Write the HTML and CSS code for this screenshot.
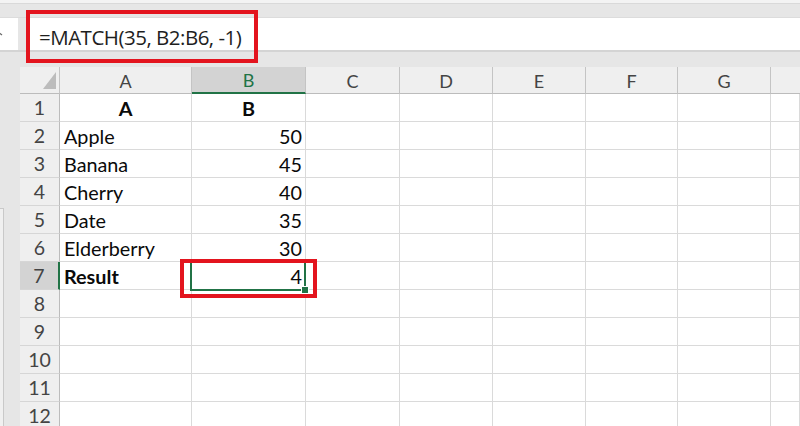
FILE: index.html
```
<!DOCTYPE html>
<html>
<head>
<meta charset="utf-8">
<link rel="stylesheet" href="styles.css">
</head>
<body>
<div class="app">
  <div class="ribbon"></div>
  <div class="formula-row">
    <div class="name-box"><svg class="nb-mark" width="6" height="32" viewBox="0 0 6 32"><polyline points="-2,14 2,17" fill="none" stroke="#666" stroke-width="1.2"/></svg></div>
    <div class="formula-input">=MATCH(35, B2:B6, -1)</div>
  </div>
  <div class="gap"></div>
  <div class="sheet-area">
    <div class="left-strip"><div class="strip-panel"></div></div>
    <div class="sheet">
      <div class="hdr corner"><svg class="tri" width="13" height="17" viewBox="0 0 13 17"><polygon points="13,0 13,17 0,17" fill="#bcbcbc"/></svg></div>
      <div class="hdr col">A</div>
      <div class="hdr col sel-col">B</div>
      <div class="hdr col">C</div>
      <div class="hdr col">D</div>
      <div class="hdr col">E</div>
      <div class="hdr col">F</div>
      <div class="hdr col">G</div>
      <div class="hdr col last"></div>

      <div class="hdr row">1</div>
      <div class="cell bold center">A</div>
      <div class="cell bold center">B</div>
      <div class="cell"></div><div class="cell"></div><div class="cell"></div><div class="cell"></div><div class="cell"></div><div class="cell"></div>

      <div class="hdr row">2</div>
      <div class="cell">Apple</div>
      <div class="cell num">50</div>
      <div class="cell"></div><div class="cell"></div><div class="cell"></div><div class="cell"></div><div class="cell"></div><div class="cell"></div>

      <div class="hdr row">3</div>
      <div class="cell">Banana</div>
      <div class="cell num">45</div>
      <div class="cell"></div><div class="cell"></div><div class="cell"></div><div class="cell"></div><div class="cell"></div><div class="cell"></div>

      <div class="hdr row">4</div>
      <div class="cell">Cherry</div>
      <div class="cell num">40</div>
      <div class="cell"></div><div class="cell"></div><div class="cell"></div><div class="cell"></div><div class="cell"></div><div class="cell"></div>

      <div class="hdr row">5</div>
      <div class="cell">Date</div>
      <div class="cell num">35</div>
      <div class="cell"></div><div class="cell"></div><div class="cell"></div><div class="cell"></div><div class="cell"></div><div class="cell"></div>

      <div class="hdr row">6</div>
      <div class="cell">Elderberry</div>
      <div class="cell num">30</div>
      <div class="cell"></div><div class="cell"></div><div class="cell"></div><div class="cell"></div><div class="cell"></div><div class="cell"></div>

      <div class="hdr row sel-row">7</div>
      <div class="cell bold">Result</div>
      <div class="cell num active">4<span class="fill-handle"></span></div>
      <div class="cell"></div><div class="cell"></div><div class="cell"></div><div class="cell"></div><div class="cell"></div><div class="cell"></div>

      <div class="hdr row">8</div>
      <div class="cell"></div><div class="cell"></div><div class="cell"></div><div class="cell"></div><div class="cell"></div><div class="cell"></div><div class="cell"></div><div class="cell"></div>

      <div class="hdr row">9</div>
      <div class="cell"></div><div class="cell"></div><div class="cell"></div><div class="cell"></div><div class="cell"></div><div class="cell"></div><div class="cell"></div><div class="cell"></div>

      <div class="hdr row">10</div>
      <div class="cell"></div><div class="cell"></div><div class="cell"></div><div class="cell"></div><div class="cell"></div><div class="cell"></div><div class="cell"></div><div class="cell"></div>

      <div class="hdr row">11</div>
      <div class="cell"></div><div class="cell"></div><div class="cell"></div><div class="cell"></div><div class="cell"></div><div class="cell"></div><div class="cell"></div><div class="cell"></div>

      <div class="hdr row">12</div>
      <div class="cell"></div><div class="cell"></div><div class="cell"></div><div class="cell"></div><div class="cell"></div><div class="cell"></div><div class="cell"></div><div class="cell"></div>
    </div>
  </div>
  <div class="callout callout-formula"></div>
  <div class="callout callout-result"></div>
</div>
</body>
</html>
```
FILE: styles.css
```
html, body {
  margin: 0;
  padding: 0;
}
body {
  width: 800px;
  height: 426px;
  overflow: hidden;
  background: #e6e6e6;
  font-family: "Lato", "Liberation Sans", sans-serif;
}
.app {
  position: relative;
  width: 800px;
  height: 426px;
  overflow: hidden;
  display: flex;
  flex-direction: column;
  background: #e6e6e6;
}
.ribbon {
  height: 18px;
  flex: none;
  box-sizing: border-box;
  background: #e6e6e6;
  border-top: 3px solid #f3f3f3;
  box-shadow: inset 0 1px 0 #d9d9d9, inset 0 -1px 0 #dcdcdc;
}
.formula-row {
  height: 34px;
  flex: none;
  box-sizing: border-box;
  display: flex;
  background: #e6e6e6;
  border-bottom: 2px solid #d4d4d4;
}
.name-box {
  width: 18px;
  background: #fff;
  overflow: hidden;
}
.nb-mark {
  display: block;
}
.formula-input {
  flex: 1;
  margin-left: 8px;
  background: #fff;
  padding: 0 0 0 13px;
  font-family: "Open Sans", "Noto Sans", sans-serif;
  font-size: 20.5px;
  letter-spacing: -0.5px;
  line-height: 38px;
  color: #1e1e1e;
  white-space: nowrap;
}
.gap {
  height: 15px;
  flex: none;
  background: #e6e6e6;
}
.sheet-area {
  flex: 1;
  display: flex;
  min-height: 0;
}
.left-strip {
  width: 20px;
  flex: none;
  background: #e6e6e6;
  display: flex;
  flex-direction: column;
  padding-top: 141px;
}
.strip-panel {
  width: 3px;
  flex: 1;
  background: #f0f0f0;
  border-top: 1px solid #c9c9c9;
  border-right: 1px solid #c9c9c9;
}
.sheet {
  flex: 1;
  display: grid;
  grid-template-columns: 40px 132px 114px 94px 93px 93px 92px 93px 1fr;
  grid-template-rows: 27px;
  grid-auto-rows: 28px;
  background: #fff;
}
.hdr {
  box-sizing: border-box;
  background: #efefef;
  color: #444;
  font-size: 18px;
  text-align: center;
}
.hdr.col {
  line-height: 28px;
  border-right: 1px solid #c4c4c4;
  border-bottom: 1px solid #bcbcbc;
}
.hdr.col.last {
  border-right: none;
}
.hdr.corner {
  position: relative;
  border-right: 1px solid #c4c4c4;
  border-bottom: 1px solid #bcbcbc;
}
.tri {
  position: absolute;
  right: 3px;
  bottom: 4px;
}
.hdr.row {
  font-size: 19.5px;
  line-height: 28px;
  border-right: 1px solid #bcbcbc;
  border-bottom: 1px solid #d6d6d6;
}
.sel-col {
  background: #d3d3d3;
  color: #217346;
  border-bottom: 2px solid #217346 !important;
  line-height: 27px !important;
}
.sel-row {
  background: #d3d3d3;
  border-right: 2px solid #217346 !important;
}
.cell {
  box-sizing: border-box;
  border-right: 1px solid #dadada;
  border-bottom: 1px solid #dadada;
  padding: 0 4px;
  font-size: 19.8px;
  line-height: 28px;
  color: #0a0a0a;
  white-space: nowrap;
}
.cell.num {
  text-align: right;
  padding-right: 3px;
}
.cell.center {
  text-align: center;
}
.cell.bold {
  font-weight: 700;
}
.cell.active {
  position: relative;
}
.cell.active::after {
  content: "";
  position: absolute;
  left: -2px;
  top: -1px;
  right: -1px;
  bottom: -2px;
  border: 2px solid #217346;
}
.fill-handle {
  position: absolute;
  right: -3px;
  bottom: -4px;
  width: 6px;
  height: 6px;
  background: #217346;
  box-shadow: 0 0 0 1px #fff;
  z-index: 2;
}
.callout {
  position: absolute;
  box-sizing: border-box;
  border: 4px solid #e3141e;
  z-index: 5;
}
.callout-formula {
  left: 26px;
  top: 10px;
  width: 232px;
  height: 53px;
}
.callout-result {
  left: 180px;
  top: 259px;
  width: 137px;
  height: 39px;
}
```
